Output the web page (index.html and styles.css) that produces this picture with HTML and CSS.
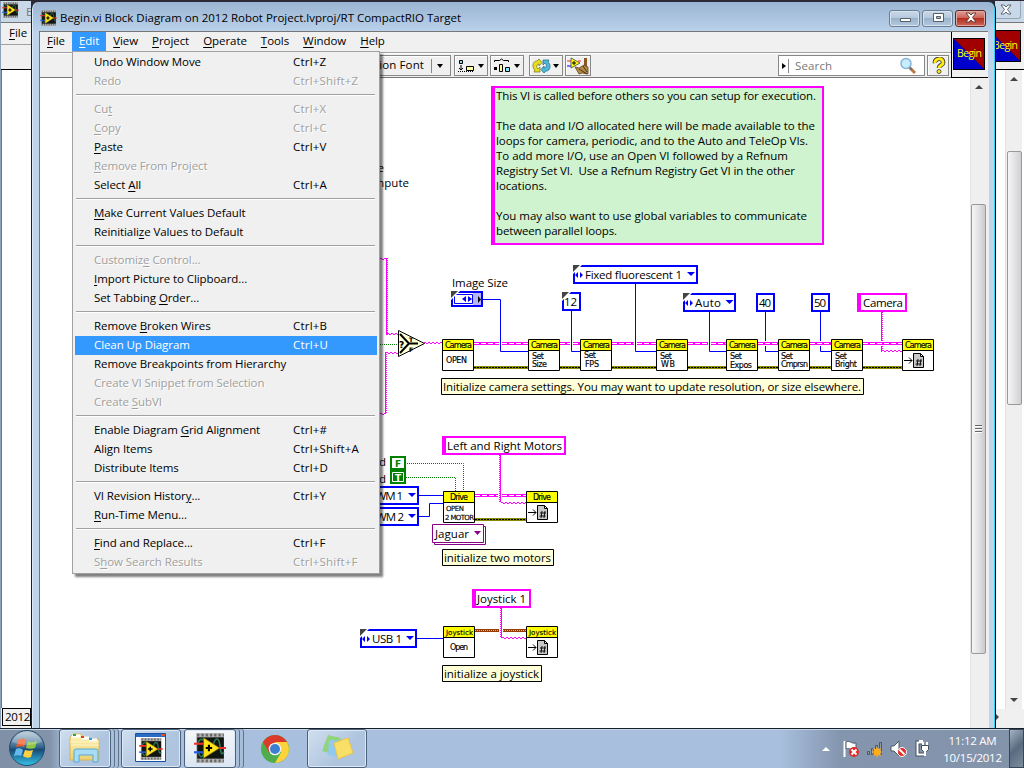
FILE: index.html
```html
<!DOCTYPE html>
<html lang="en">
<head>
<meta charset="utf-8">
<title>Begin.vi Block Diagram</title>
<link rel="stylesheet" href="styles.css">
</head>
<body>
<svg class="defs" width="0" height="0">
  <defs>
    <linearGradient id="orb" x1="0" y1="0" x2="0" y2="1"><stop offset="0" stop-color="#b9cbd8"/><stop offset=".45" stop-color="#3b6c91"/><stop offset=".55" stop-color="#174b77"/><stop offset="1" stop-color="#35c4ea"/></linearGradient>
    <linearGradient id="fold" x1="0" y1="0" x2="0" y2="1"><stop offset="0" stop-color="#fff3b8"/><stop offset="1" stop-color="#ead071"/></linearGradient>
    <symbol id="lv" viewBox="0 0 30 28">
      <path d="M2 0h26v28H2z" fill="#b4b4b4"/>
      <path d="M3 2h25M3 26h25" stroke="#666" stroke-width="2.500" stroke-dasharray="2 2"/>
      <path d="M3 4h25v20H3z" fill="#101512"/>
      <path d="M18 11c2-7 5-7 6-1s1 12 4 8M4 18c2 6 4 5 5 1M4 9c1-3 3-4 5-2" fill="none" stroke="#2d7a52" stroke-width="1.500"/>
      <path d="M9 4.500v19L24 14z" fill="#ffe51a" stroke="#8a7200" stroke-width=".6"/>
      <path d="M11 14h6M14 11v6" stroke="#000" stroke-width="2"/>
      <path d="M0 10h9M24 14h6" stroke="#f03030" stroke-width="2"/><path d="M0 18h9" stroke="#2b5be0" stroke-width="2"/>
    </symbol>
    <symbol id="node" viewBox="0 0 32 32"><path d="M.5.500h31v31H.5z" fill="#fff" stroke="#000"/><path d="M1 1h30v10H1z" fill="#ff0"/><path d="M1 11.500h30" stroke="#000"/></symbol>
    <symbol id="ref" viewBox="0 0 32 32"><use href="#node" width="32" height="32"/><path d="M2 21.500h8M7 18.500l3 3-3 3" fill="none" stroke="#000"/><path d="M11.500 14.500h7l3 3v11h-10zM18.500 14.500v3h3" fill="#c8c8c8" stroke="#000"/><path d="M14 22h6M13.500 25h6M16 20l-1 7M19 20l-1 7" stroke="#000" stroke-width=".9"/></symbol>
    <symbol id="corner" viewBox="0 0 9 9"><path d="M0 0h9L0 9z" fill="#fff"/><path d="M0 0h7L0 7z" fill="#444"/></symbol>
    <symbol id="inc" viewBox="0 0 8 6"><path d="M3 0v6L0 3zM5 0v6l3-3z" fill="#00f"/></symbol>
  </defs>
</svg>

<main class="desktop">
  <section class="back back-left">
    <div class="back-title"><svg width="17" height="16"><use href="#lv" width="17" height="16"/></svg><span>B</span></div>
    <div class="back-menu"><u>F</u>ile</div>
    <div class="back-tools"></div>
    <div class="back-body"></div>
    <div class="back-foot">2012</div>
  </section>
  <section class="back back-right">
    <div class="back-title"><div class="back-close"><svg width="14" height="12"><path d="M2 1h3l2 2 2-2h3L8.500 5.500 12 10H9L7 8l-2 2H2l3.500-4.500z" fill="#fff" stroke="#5c6670"/></svg></div></div>
    <div class="back-icon"><svg width="26" height="32" viewBox="6 0 26 32"><path d="M0 0h32v32H0z" fill="#000"/><path d="M1 1h30v30z" fill="#a00000"/><path d="M1 1v30h30z" fill="#00c"/><text class="begin" x="4" y="19" textLength="25">Begin</text></svg></div>
    <div class="back-scroll">
      <div class="bar"><i class="up"></i><i class="fill"></i><i class="down"></i></div>
    </div>
    <div class="back-corner"><i></i></div>
  </section>

  <section class="window">
    <header class="titlebar">
      <svg width="17" height="16"><use href="#lv" width="17" height="16"/></svg>
      <h1>Begin.vi Block Diagram on 2012 Robot Project.lvproj/RT CompactRIO Target</h1>
      <div class="controls">
        <span class="ctl"><svg width="14" height="12"><path d="M2.500 6.500h10v3h-10z" fill="#fff" stroke="#555f69"/></svg></span>
        <span class="ctl"><svg width="14" height="12"><path d="M2.500 1.500h10v8h-10z" fill="#fff" stroke="#555f69"/><path d="M5.500 4.500h4v2h-4z" fill="#a9bfd5" stroke="#555f69"/></svg></span>
        <span class="ctl close"><svg width="14" height="12"><path d="M2 1h3l2 2 2-2h3L8.500 5.500 12 10H9L7 8l-2 2H2l3.500-4.500z" fill="#fff" stroke="#6b3a38"/></svg></span>
      </div>
    </header>
    <div class="client">
      <div class="top">
        <div class="bars">
          <nav class="menubar"><span><u>F</u>ile</span><span class="open"><u>E</u>dit</span><span><u>V</u>iew</span><span><u>P</u>roject</span><span><u>O</u>perate</span><span><u>T</u>ools</span><span><u>W</u>indow</span><span><u>H</u>elp</span></nav>
          <div class="toolbar">
            <div class="tool font"><span>Application Font</span><b></b><i class="tri"></i></div>
            <div class="tool"><svg width="19" height="16"><path d="M2.500 2.500h3v3h-3z" fill="#7fe8ff" stroke="#000"/><path d="M4 7v5M2 10l2 2 2-2" fill="none" stroke="#000"/><path d="M9.500 8.500h7v4h-7z" fill="#ffffa0" stroke="#000"/><path d="M1 13.500h16" stroke="#000" stroke-dasharray="1 1"/></svg><i class="tri"></i></div>
            <div class="tool"><svg width="19" height="16"><path d="M1.500 4V2.500h5l2-1.500 2 1.500h5V4" fill="none" stroke="#000"/><path d="M1 9h3v3H1z"/><path d="M6.500 6.500h3v7h-3z" fill="#ffffa0" stroke="#000"/><path d="M12.500 9.500h4v4h-4z" fill="#7fe8ff" stroke="#000"/></svg><i class="tri"></i></div>
            <div class="tool sync"><svg width="19" height="16"><path d="M7 1L5 3C0 3 0 10 3 12l-1 2h6V9L6 11C4 9 4 7 7 6v2l3-3.500z" fill="#e5df20" stroke="#77710a" stroke-width=".7"/><path d="M12 15l2-2c5 0 5-7 2-9l1-2h-6v5l2-2c2 2 2 4-1 5V8l-3 3.500z" fill="#4db9da" stroke="#176783" stroke-width=".7"/></svg><i class="tri"></i></div>
            <div class="tool broom"><svg width="24" height="18"><path d="M1 4h4M12 4h3" stroke="#f22"/><path d="M1 9h4" stroke="#00f"/><path d="M18 1h3v9h-3z" fill="#8a5a24"/><path d="M9 10l4 1 5-3 4 2v7l-6-1-3 1z" fill="#b48a44" stroke="#60431c" stroke-width=".8"/><path d="M13 12l8 5M17 9l4 6" stroke="#49351e"/><path d="M5 1v10l9-5z" fill="#ff0" stroke="#444" stroke-width=".8"/><path d="M6 6h4M8 4v4" stroke="#000"/></svg></div>
            <div class="search"><i class="play"></i><b></b><span>Search</span><svg width="18" height="18"><path d="M10 10l6 6" stroke="#bd7845" stroke-width="3"/><path d="M10 10l3 3" stroke="#777" stroke-width="2"/><circle cx="7" cy="6.500" r="5" fill="#c8edff" stroke="#86b4d6" stroke-width="1.500"/></svg></div>
            <div class="tool help"><svg width="14" height="18"><path d="M3 6C2 1 12 0 11 6c0 2-4 2-4 5" fill="none" stroke="#333" stroke-width="4.500"/><path d="M3 6C2 1 12 0 11 6c0 2-4 2-4 5" fill="none" stroke="#ffeb14" stroke-width="3"/><circle cx="7" cy="14.500" r="2" fill="#ffeb14" stroke="#333" stroke-width=".8"/></svg></div>
          </div>
        </div>
        <div class="vi-icon"><svg width="32" height="32"><path d="M0 0h32v32H0z" fill="#000"/><path d="M1 1h30v30z" fill="#a00000"/><path d="M1 1v30h30z" fill="#00c"/><text class="begin" x="4" y="19" textLength="25">Begin</text></svg></div>
      </div>
      <div class="work">
        <svg class="diagram" width="930" height="650" viewBox="40 78 930 650">
          <g class="txt">
            <text x="384" y="172" text-anchor="end">e</text><text x="409" y="187" text-anchor="end" textLength="48">compute</text>
            <path d="M493 87h330v157H493z" fill="#cff3cf" stroke="#f0f" stroke-width="2"/><path d="M491 86h4v159h-4z" fill="#f0f"/>
            <text x="496" y="100" textLength="320">This VI is called before others so you can setup for execution.</text>
            <text x="496" y="130" textLength="319">The data and I/O allocated here will be made available to the</text>
            <text x="496" y="145" textLength="312">loops for camera, periodic, and to the Auto and TeleOp VIs.</text>
            <text x="496" y="160" textLength="292">To add more I/O, use an Open VI followed by a Refnum</text>
            <text x="496" y="175" textLength="299" xml:space="preserve">Registry Set VI.  Use a Refnum Registry Get VI in the other</text>
            <text x="496" y="190" textLength="51">locations.</text>
            <text x="496" y="220" textLength="311">You may also want to use global variables to communicate</text>
            <text x="496" y="235" textLength="121">between parallel loops.</text>
          </g>

          <g class="pink">
            <path d="M386.500 258v77M385.500 352v62M881.500 312v29M881.500 346v6M500.500 455v47M501.500 608v30"/>
            <path class="dots" d="M387.500 258v77M386.500 352v62M882.500 312v29M882.500 346v6M499.500 455v47M500.500 608v30"/>
            <path class="wave" d="M380 258.500h7M387 333.500h11M386 352.500h12M380 413.500h6M424 342.500h18M882 350.500h20M501 502.500h25M502 637.500h24"/>
            <path class="wave low" d="M380 259.500h7M387 334.500h11M386 353.500h12M380 414.500h6M424 343.500h18M882 351.500h20M501 503.500h25M502 638.500h24"/>
          </g>
          <g class="cluster">
            <path d="M474 343.500h25M502 343.500h26M560 343.500h10M573 343.500h7M612 343.500h22M637 343.500h19M688 343.500h20M711 343.500h15M758 343.500h20M810 343.500h21M863 343.500h39M475 495.500h23M502 495.500h24"/>
            <path class="mid" d="M474 343.500h25M502 343.500h26M560 343.500h10M573 343.500h7M612 343.500h22M637 343.500h19M688 343.500h20M711 343.500h15M758 343.500h20M810 343.500h21M863 343.500h39M475 495.500h23M502 495.500h24"/>
          </g>
          <g class="error">
            <path d="M474 367.500h54M560 367.500h20M612 367.500h44M688 367.500h38M758 367.500h20M810 367.500h21M863 367.500h39M475 519.500h51"/>
            <path class="mid" d="M474 367.500h54M560 367.500h20M612 367.500h44M688 367.500h38M758 367.500h20M810 367.500h21M863 367.500h39M475 519.500h51"/>
          </g>
          <g class="joy"><path d="M475 630.500h24M503 630.500h23"/><path class="mid" d="M475 630.500h24M503 630.500h23"/></g>
          <path class="blue" d="M483 299.500h17.500v52H528M571.500 311v40.500H580M635.500 284v67.500H656M709.500 312v39.500H726M765.500 312v29M765.500 346v5.500H778M820.500 312v29M820.500 346v5.500H831M419 495.500h24M419 516.500h10.500v-13H443M417 638.500h26"/>
          <path class="green" d="M380 344.500h18M407 463.500h56.500V491M406 477.500h49.500V491"/>

          <path d="M398.500 330.500v26l26-13z" fill="#ffffd8" stroke="#000"/><path d="M400 334l9 9.500-9 9.500M409 343.500h9" fill="none" stroke="#000" stroke-width="2"/>
          <g class="pix"><text class="q" x="399" y="348">?</text><text x="409" y="342" class="tiny">T</text><text x="409" y="352" class="tiny">F</text></g>

          <g class="nodes">
            <use href="#node" x="442" y="339" width="32" height="32"/><use href="#node" x="528" y="339" width="32" height="32"/><use href="#node" x="580" y="339" width="32" height="32"/><use href="#node" x="656" y="339" width="32" height="32"/><use href="#node" x="726" y="339" width="32" height="32"/><use href="#node" x="778" y="339" width="32" height="32"/><use href="#node" x="831" y="339" width="32" height="32"/><use href="#ref" x="902" y="339" width="32" height="32"/>
            <use href="#node" x="443" y="491" width="32" height="32"/><use href="#ref" x="526" y="491" width="32" height="32"/><use href="#node" x="443" y="626" width="32" height="32"/><use href="#ref" x="526" y="626" width="32" height="32"/>
          </g>
          <g class="pix">
            <text x="445" y="348" textLength="27">Camera</text><text x="531" y="348" textLength="27">Camera</text><text x="583" y="348" textLength="27">Camera</text><text x="659" y="348" textLength="27">Camera</text><text x="729" y="348" textLength="27">Camera</text><text x="781" y="348" textLength="27">Camera</text><text x="834" y="348" textLength="27">Camera</text><text x="905" y="348" textLength="27">Camera</text>
            <text x="446" y="363" textLength="21">OPEN</text>
            <text x="532" y="359" textLength="12">Set</text><text x="532" y="367" textLength="15">Size</text>
            <text x="584" y="358" textLength="12">Set</text><text x="585" y="367" textLength="14">FPS</text>
            <text x="660" y="359" textLength="12">Set</text><text x="661" y="367" textLength="14">WB</text>
            <text x="730" y="359" textLength="12">Set</text><text x="730" y="368" textLength="22">Expos</text>
            <text x="781" y="359" textLength="12">Set</text><text x="781" y="367" textLength="27">Cmprsn</text>
            <text x="835" y="359" textLength="12">Set</text><text x="835" y="367" textLength="22">Bright</text>
            <text x="450" y="500" textLength="18">Drive</text><text x="533" y="500" textLength="18">Drive</text>
            <text x="446" y="511" textLength="18" class="small">OPEN</text><text x="445" y="520" textLength="29" class="small">2 MOTOR</text>
            <text x="446" y="635" textLength="27" class="small">Joystick</text><text x="529" y="635" textLength="27" class="small">Joystick</text><text x="450" y="650" textLength="18">Open</text>
          </g>

          <g class="const">
            <path d="M574 266h123v17H574zM563 293h17v17h-17zM684 294h51v17h-51zM757 294h17v17h-17zM812 294h17v17h-17zM361 630h55v17h-55zM360 487h58v17h-58zM360 508h58v17h-58zM452 292h30v14h-30z"/>
          </g>
          <path d="M473 293h8v12h-8z" fill="#b6b6f8"/><path d="M454.500 294.500h18v9h-18z" fill="#fff" stroke="#00f"/><path d="M478 296v7l3-3.500z"/>
          <path d="M466 296v6l-4-3zM468 296v6l4-3zM687 272h8l-4 4zM725.500 300h8l-4 4zM408 493h8l-4 4zM408 514h8l-4 4zM406 636h8l-4 4z" fill="#00f"/>
          <use href="#corner" x="573" y="265" width="9" height="9"/><use href="#corner" x="562" y="292" width="9" height="9"/><use href="#corner" x="683" y="293" width="9" height="9"/><use href="#corner" x="451" y="291" width="9" height="9"/><use href="#corner" x="360" y="629" width="9" height="9"/>
          <use href="#inc" x="575" y="272" width="8" height="6"/><use href="#inc" x="685" y="300" width="8" height="6"/><use href="#inc" x="362" y="636" width="8" height="6"/>
          <g fill="#fff" stroke="#f0f" stroke-width="2"><path d="M859 294h47v17h-47zM444 437h121v17H444zM474 590h56v17h-56z"/></g>
          <path d="M857 293h4v19h-4zM442 436h4v19h-4zM472 589h4v19h-4z" fill="#f0f"/>
          <path d="M434.500 526.500h51v18h-51z" fill="#fff" stroke="#808"/><path d="M432.500 524.500h51v18h-51z" fill="#fff" stroke="#808"/><path d="M474 531h7l-3.500 4z" fill="#808"/>
          <path d="M391 457h14v12h-14z" fill="#fff" stroke="green" stroke-width="2"/><path d="M390 470h16v14h-16z" fill="green"/><path d="M392.500 472.500h11v9h-11z" fill="none" stroke="#fff"/>
          <text class="bool f" x="395" y="467">F</text><text class="bool t" x="395" y="481">T</text>
          <path d="M441.500 378.500h422v16h-422zM442.500 549.500h111v16h-111zM442.500 665.500h99v16h-99z" fill="#ffffd8" stroke="#000"/>
          <g class="txt">
            <text x="452" y="287" textLength="56">Image Size</text><text x="585" y="279" textLength="97">Fixed fluorescent 1</text><text x="564" y="306" textLength="13">12</text><text x="695" y="307" textLength="26">Auto</text><text x="759" y="307" textLength="12">40</text><text x="814" y="307" textLength="12">50</text><text x="863" y="307" textLength="40">Camera</text>
            <text x="443" y="391" textLength="418">Initialize camera settings. You may want to update resolution, or size elsewhere.</text>
            <text x="447" y="450" textLength="115">Left and Right Motors</text><text x="386" y="466" text-anchor="end">d</text><text x="386" y="483" text-anchor="end">d</text><text x="370" y="500" textLength="33">PWM 1</text><text x="370" y="521" textLength="34">PWM 2</text><text x="435" y="538" textLength="34">Jaguar</text>
            <text x="444" y="562" textLength="107">initialize two motors</text><text x="477" y="603" textLength="49">Joystick 1</text><text x="372" y="643" textLength="30">USB 1</text><text x="444" y="678" textLength="95">initialize a joystick</text>
          </g>
        </svg>
        <div class="scroll"><i class="up"></i><div class="thumb"><i></i></div></div>
      </div>
    </div>
  </section>

  <div class="menu">
    <div class="item"><span>Undo Window Move</span><kbd>Ctrl+Z</kbd></div>
    <div class="item off"><span>Redo</span><kbd>Ctrl+Shift+Z</kbd></div>
    <hr>
    <div class="item off"><span>Cu<u>t</u></span><kbd>Ctrl+X</kbd></div>
    <div class="item off"><span><u>C</u>opy</span><kbd>Ctrl+C</kbd></div>
    <div class="item"><span><u>P</u>aste</span><kbd>Ctrl+V</kbd></div>
    <div class="item off"><span><u>R</u>emove From Project</span></div>
    <div class="item"><span>Select <u>A</u>ll</span><kbd>Ctrl+A</kbd></div>
    <hr>
    <div class="item"><span><u>M</u>ake Current Values Default</span></div>
    <div class="item"><span>Reinitiali<u>z</u>e Values to Default</span></div>
    <hr>
    <div class="item off"><span>Customiz<u>e</u> Control...</span></div>
    <div class="item"><span><u>I</u>mport Picture to Clipboard...</span></div>
    <div class="item"><span>Set Tabbing <u>O</u>rder...</span></div>
    <hr>
    <div class="item"><span>Remove <u>B</u>roken Wires</span><kbd>Ctrl+B</kbd></div>
    <div class="item hot"><span>Clean Up Diagram</span><kbd>Ctrl+U</kbd></div>
    <div class="item"><span>Remove Breakpoints from Hierarchy</span></div>
    <div class="item off"><span>Create VI Snippet from Selection</span></div>
    <div class="item off"><span>Create <u>S</u>ubVI</span></div>
    <hr>
    <div class="item"><span>Enable Diagram <u>G</u>rid Alignment</span><kbd>Ctrl+#</kbd></div>
    <div class="item"><span>Align Items</span><kbd>Ctrl+Shift+A</kbd></div>
    <div class="item"><span>Distribute Items</span><kbd>Ctrl+D</kbd></div>
    <hr>
    <div class="item"><span>VI Revision Histor<u>y</u>...</span><kbd>Ctrl+Y</kbd></div>
    <div class="item"><span><u>R</u>un-Time Menu...</span></div>
    <hr>
    <div class="item"><span><u>F</u>ind and Replace...</span><kbd>Ctrl+F</kbd></div>
    <div class="item off"><span>S<u>h</u>ow Search Results</span><kbd>Ctrl+Shift+F</kbd></div>
  </div>

  <footer class="taskbar">
    <div class="start"><svg width="38" height="38"><circle cx="19" cy="19" r="17.500" fill="url(#orb)" stroke="#244b6b"/><path d="M10 11c3-2 6-2 8 0l-2 7c-2-1-5-1-8 0z" fill="#ef5b27"/><path d="M20 12c3 2 6 1 9 0l-2 7c-3 1-6 1-9 0z" fill="#8fc742"/><path d="M8 20c2-1 5-1 7 1l-2 6c-2-1-4-1-7 0z" fill="#65b9ed"/><path d="M17 21c3 1 5 1 8 0l-2 7c-3 1-5 1-8-1z" fill="#ffd041"/><path d="M4 13C8 0 30 0 34 13 24 17 14 17 4 13z" fill="#fff" opacity=".25"/></svg></div>
    <div class="task stack explorer"><svg width="34" height="32"><path d="M2 5l3-3h8l2 3h6l2 2h8v21H2z" fill="url(#fold)" stroke="#d5b65c"/><path d="M4 4h8M13 6h8M21 8h8" stroke="#fff" stroke-width="3"/><path d="M5 3h3" stroke="#2aa83e" stroke-width="2"/><path d="M13 5h3" stroke="#da4030" stroke-width="2"/><path d="M21 7h3" stroke="#2a9ee5" stroke-width="2"/><path d="M2 10h29M3 13h28" stroke="#fff5c6"/><path d="M6 30V19q0-2 2-2h20q2 0 2 2v11h-5v-7H11v7z" fill="#a8dcf3" stroke="#5ba8d2"/></svg></div>
    <div class="task"><svg width="32" height="30"><path d="M.5.500h30v28H.5z" fill="#fff" stroke="#1552a4"/><path d="M1 1h29v3H1z" fill="#2a6bc4"/><path d="M26 1h4v2h-4z" fill="#e0502b"/><use href="#lv" x="4" y="5" width="24" height="22"/></svg></div>
    <div class="task stack active"><svg width="32" height="30"><use href="#lv" width="32" height="30"/></svg></div>
    <div class="task plain"><svg width="30" height="30"><circle cx="15" cy="15" r="14" fill="#4fae4b"/><path d="M15 15L2.900 8a14 14 0 0 1 24.200 0z" fill="#dc3b2b"/><path d="M15 8h12.100A14 14 0 0 1 15 29l6-10.500z" fill="#fdd23a"/><path d="M3 8l6 10.500L15 15V8z" fill="#dc3b2b"/><circle cx="15" cy="15" r="6.300" fill="#f4f4f4"/><circle cx="15" cy="15" r="5" fill="#3f7fd2"/></svg></div>
    <div class="task notes"><svg width="34" height="28"><path d="M8 1l13 3-5 17-14-4z" fill="#92d47d"/><path d="M9 6l16 1-3 17-14-3z" fill="#91c9f0"/><path d="M14 9l14-5 5 15-15 6z" fill="#f9df67" stroke="#e7c64a"/></svg></div>
    <div class="tray">
      <i class="chev"></i>
      <svg width="18" height="18"><path d="M2.500 1v16" stroke="#fff" stroke-width="2"/><path d="M4 2c4-2 5 2 10 1v7c-5 1-6-3-10-1z" fill="#fff" stroke="#525d6e"/><circle cx="12" cy="12" r="5" fill="#e02b29"/><path d="M9.500 9.500l5 5m0-5l-5 5" stroke="#fff" stroke-width="2"/></svg>
      <svg width="18" height="18"><path d="M1.500 11.500h2v3h-2zM5.500 8.500h2v6h-2zM9.500 5.500h2v9h-2zM13.500 2.500h2v12h-2z" fill="#929aa2" stroke="#4d5865"/><path d="M11 6l1 3 3-1-1 3 3 1-3 1 1 3-3-1-1 3-1-3-3 1 1-3-3-1 3-1-1-3 3 1z" fill="#ffac16"/></svg>
      <svg width="18" height="18"><path d="M1 6h3l5-5v15l-5-5H1z" fill="#fff" stroke="#4d5865"/><circle cx="12" cy="12" r="4.500" fill="#e02b29" stroke="#fff"/><path d="M9.500 9.500l5 5" stroke="#fff" stroke-width="2"/></svg>
      <svg width="18" height="18"><path d="M9 2.500H3.500v12H10" fill="none" stroke="#444f5d" stroke-width="4"/><path d="M9 2.500H3.500v12H10M5 .500h4" fill="none" stroke="#fff" stroke-width="2"/><path d="M9 2v4M13 2v4" stroke="#fff" stroke-width="2"/><path d="M7.500 5.500h7v4l-2 2h-3l-2-2z" fill="#fff" stroke="#444f5d"/><path d="M11 11v5" stroke="#fff" stroke-width="2"/></svg>
      <div class="clock"><span>11:12 AM</span><span>10/15/2012</span></div>
      <div class="peek"></div>
    </div>
  </footer>
</main>
</body>
</html>
```

FILE: styles.css
```css
* { box-sizing: border-box; }
body { margin: 0; width: 1024px; height: 768px; overflow: hidden; font: 11.5px/15px "Open Sans", "Noto Sans", sans-serif; color: #000; }
svg { display: block; flex: none; }
.defs { position: absolute; }
.desktop { position: relative; width: 1024px; height: 768px; background: #2c2b35; overflow: hidden; }
u { text-decoration: underline; text-underline-offset: 2px; text-decoration-thickness: 1px; }

.back { position: absolute; top: 1px; height: 727px; display: flex; flex-direction: column; background: #f0f0f0; }
.back-left { left: 0; width: 31px; border-left: 1px solid #8ba0b8; }
.back-right { left: 995px; width: 29px; }
.back-title { height: 22px; display: flex; background: #c8d8e8; border-bottom: 1px solid #777; padding: 1px 0 0 1px; }
.back-title span { margin: 2px 0 0 7px; color: #777; }
.back-right .back-title { padding: 0 3px 3px 0; }
.back-close { flex: 1; display: flex; align-items: center; padding-left: 4px; border: 1px solid #97a5b4; border-width: 0 1px 1px 0; border-radius: 0 0 3px 0; }
.back-menu { height: 22px; padding: 2px 0 0 8px; border-bottom: 1px solid #a0a0a0; }
.back-tools { height: 25px; border-bottom: 1px solid #000; }
.back-body { flex: 1; background: #fff; border-left: 1px solid #777; }
.back-foot { height: 18px; margin: 0 0 2px 1px; border: 1px solid #000; padding-left: 2px; letter-spacing: -.3px; }
.back-icon { height: 47px; padding-top: 7px; border-bottom: 1px solid #000; }
.back-scroll { flex: 1; display: flex; justify-content: flex-end; background: #fff; padding-right: 2px; }
.bar { width: 17px; background: #efefef; border-left: 1px solid #e0e0e0; display: flex; flex-direction: column; align-items: center; padding: 7px 0 7px; }
.bar .fill { flex: 0 0 254px; margin: 70px 0 auto; width: 15px; border: 1px solid #999; border-radius: 2px; background: linear-gradient(90deg, #f5f5f5, #d0d0d4); }
.back-corner { height: 19px; padding: 4px 0; }
.back-corner i { display: block; width: 0; border: 4px solid transparent; border-left-color: #444; }
.up, .down { display: block; width: 0; height: 0; border: 4px solid transparent; }
.up { border-top: 0; border-bottom-color: #444; }
.down { border-bottom: 0; border-top-color: #444; }
.begin { fill: #ff0; font: 10.500px "Open Sans", sans-serif; }

.window { position: absolute; left: 31px; top: 2px; width: 965px; height: 726px; display: flex; flex-direction: column; border-left: 1px solid #182029; border-right: 1px solid #000; border-radius: 7px 7px 0 0; background: linear-gradient(#9ab4d2, #bdd4ec 32px, #bdd4ec); box-shadow: inset -1px 0 #30d5f4, inset 1px 0 #d9e9f7; padding: 0 7px; overflow: hidden; }
.titlebar { height: 29px; display: flex; align-items: center; padding: 2px 2px 0 1px; flex: none; }
h1 { font: inherit; margin: 0 auto 0 3px; white-space: nowrap; letter-spacing: -.015px; }
.controls { display: flex; gap: 2px; padding-top: 1px; }
.ctl { width: 31px; height: 17px; display: flex; align-items: center; justify-content: center; border: 1px solid #6c7e92; border-radius: 3px; background: linear-gradient(#cad9e8, #b5c8dc 45%, #9bb2cb 50%, #b3c9df); box-shadow: inset 0 0 0 1px #d5e3f0; }
.ctl.close { border-color: #612724; background: linear-gradient(#e0a096, #cb6658 45%, #b52e20 50%, #c9685a); box-shadow: inset 0 0 0 1px #e0aba4; }
.client { flex: 1; display: flex; flex-direction: column; border-left: 1px solid #777; border-top: 1px solid #777; background: #f0f0f0; }
.top { display: flex; height: 46px; }
.bars { flex: 1; border-bottom: 1px solid #777; }
.menubar { display: flex; height: 21px; border-bottom: 1px solid #a0a0a0; }
.menubar span { height: 19px; padding: 0 7px; line-height: 17px; letter-spacing: -.06px; }
.menubar .open { background: #39f; color: #fff; }
.toolbar { display: flex; height: 24px; padding-top: 1px; border-top: 1px solid #fff; }
.tool { width: 34px; height: 21px; border: 1px solid #888; box-shadow: inset 1px 1px #fff; display: flex; align-items: center; margin-right: 2px; padding-left: 2px; }
.font { width: 151px; margin-left: 260px; margin-right: 3px; justify-content: flex-end; gap: 7px; padding-right: 7px; white-space: nowrap; }
.font span { letter-spacing: .1px; margin-right: -1px; margin-top: -2px; }
.font b, .search b { width: 1px; height: 14px; background: #888; }
.font b { margin-left: 1px; margin-right: -4px; }
.tri { width: 0; border: 3px solid transparent; border-top: 4px solid #000; border-bottom: 0; margin-left: 2px; }
.sync { margin-left: 3px; }
.broom { width: 26px; padding: 0; }
.search { width: 147px; height: 21px; margin-left: auto; display: flex; align-items: center; border: 1px solid #888; background: #fff; color: #777; padding-left: 3px; }
.search span { margin-left: 6px; letter-spacing: .15px; }
.search svg { margin: 0 7px 0 auto; }
.play { width: 0; border: 3px solid transparent; border-left: 4px solid #000; border-right: 0; margin-right: 2px; }
.help { width: 22px; padding-left: 4px; margin-left: 2px; }
.vi-icon { width: 37px; border-left: 1px solid #000; border-bottom: 1px solid #000; padding: 6px 0 0 1px; }
.work { flex: 1; display: flex; }
.diagram { background: #fff; }
.scroll { flex: 1; border-left: 1px solid #e4e4e4; background: #efefef; display: flex; flex-direction: column; align-items: center; padding: 7px 3px 0 0; }
.thumb { margin-top: 115px; height: 450px; width: 15px; border: 1px solid #999; border-radius: 2px; background: linear-gradient(90deg, #f5f5f5, #e3e3e5 50%, #cacace); display: flex; align-items: center; justify-content: center; }
.thumb i { width: 7px; height: 8px; background: repeating-linear-gradient(#666 0 1px, #fff 1px 2px, transparent 2px 3px); }

.txt text { font: 11.5px "Open Sans", "Noto Sans", sans-serif; fill: #000; }
.pix text { font: 8px "DejaVu Sans", sans-serif; fill: #000; stroke: #000; stroke-width: .15px; }
.pix .small { font-size: 7px; }
.pix .tiny { font-size: 6px; font-weight: bold; }
.pix .q { font-size: 9px; font-weight: bold; }
.bool { font: bold 9px "DejaVu Sans", sans-serif; }
.f { fill: green; }
.t { fill: #fff; }
.pink path { fill: none; stroke: #f0f; }
.pink .dots { stroke-dasharray: 1 1; }
.pink .wave { stroke-dasharray: 2 2; }
.pink .low { stroke-dashoffset: 2; }
.cluster path { stroke: #f0f; stroke-width: 3; }
.cluster .mid { stroke: #fff; stroke-width: 1; stroke-dasharray: 5 2; }
.error path { stroke: #8a8a00; stroke-width: 3; }
.error .mid { stroke: #000; stroke-width: 1; stroke-dasharray: 2 1; }
.joy path { stroke: #963c00; stroke-width: 3; }
.joy .mid { stroke: #e3b08a; stroke-width: 1; stroke-dasharray: 1 1; }
.blue { fill: none; stroke: #00f; }
.green { fill: none; stroke: green; stroke-dasharray: 1 1; }
.const path { fill: #fff; stroke: #00f; stroke-width: 2; }

.menu { position: absolute; left: 72px; top: 51px; width: 308px; height: 523px; padding: 1px 2px; border: 1px solid #a0a0a0; background: #f0f0f0; box-shadow: 3px 3px 2px rgba(0, 0, 0, .5); }
.item { height: 19px; padding-left: 19px; display: flex; white-space: nowrap; line-height: 18px; letter-spacing: -.08px; }
.item span { width: 199px; }
.item kbd { font: inherit; letter-spacing: .2px; }
.off { color: #a0a0a0; text-shadow: 1px 1px #fff; }
.hot { background: #39f; color: #fff; }
hr { height: 2px; margin: 3px 2px 4px 1px; border: 0; border-top: 1px solid #a0a0a0; background: #fff; }

.taskbar { position: absolute; left: 0; top: 728px; width: 1024px; height: 40px; display: flex; border-top: 1px solid #17202b; background: linear-gradient(90deg, #8090a6 0, #8293aa 50px, #a8c0de 66px, #a8c0de 780px, #8495ae 840px, #8393aa); box-shadow: inset 0 1px #c5d7e9; }
.start { width: 59px; flex: none; padding: 0 0 0 8px; }
.task { height: 39px; width: 60px; flex: none; margin-right: 3px; border: 1px solid #4c617c; border-radius: 3px; display: flex; align-items: center; justify-content: center; background: linear-gradient(135deg, #d1dfef, #afc5df 60%); box-shadow: inset 0 0 0 1px #dce8f4; }
.stack { width: 52px; margin-right: 10px; box-shadow: inset 0 0 0 1px #dce8f4, 3px 0 0 #a9bed8, 4px 0 0 #60748d, 7px 0 0 #a9bed8, 8px 0 0 #60748d; }
.task svg { margin-top: -2px; }
.active { background: linear-gradient(#f4f8fb, #dbe5f2); }
.plain { width: 58px; border: 0; background: none; box-shadow: none; }
.plain svg { margin-top: 0; }
.tray { margin-left: auto; width: 211px; flex: none; display: flex; align-items: center; gap: 6px; color: #fff; }
.tray svg, .clock, .peek { flex: none; }
.chev { width: 0; border: 4px solid transparent; border-top: 0; border-bottom: 4px solid #fff; margin-right: 6px; margin-left: 9px; }
.clock { display: flex; flex-direction: column; align-items: center; width: 61px; margin: 0 0 0 4px; line-height: 17px; white-space: nowrap; font-size: 11.5px; letter-spacing: -.25px; }
.peek { width: 15px; height: 39px; border: 1px solid #36475a; background: linear-gradient(135deg, #a5b2c1, #596b80 50%, #7d8d9f); margin-left: auto; }
```
